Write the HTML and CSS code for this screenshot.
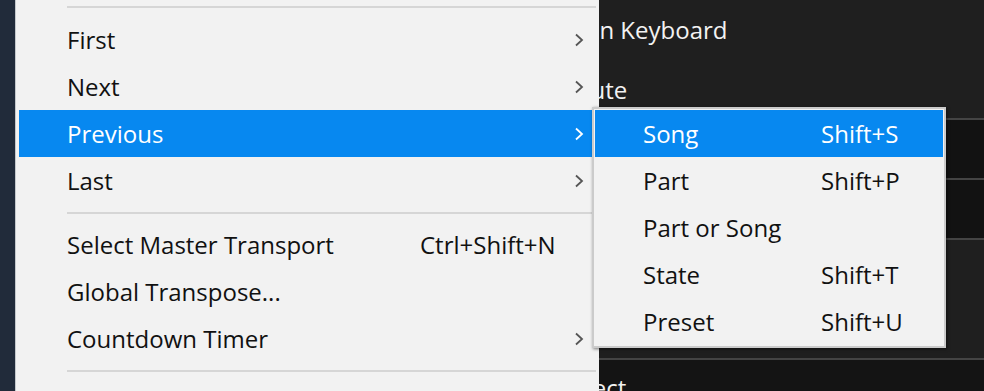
FILE: index.html
```html
<!DOCTYPE html>
<html lang="en">
<head>
  <meta charset="UTF-8" />
  <title>Transport menu</title>
  <link rel="stylesheet" href="styles.css">
</head>
<body>
  <div class="app">
    <div class="rail"></div>
    <div class="panel">
      <div class="band band-top">
        <div class="bg-item bg-keyboard">Screen Keyboard</div>
        <div class="bg-item bg-mute">Mute</div>
      </div>
      <div class="band band-dark"></div>
      <div class="band band-dark"></div>
      <div class="band band-mid"></div>
      <div class="band band-last">
        <div class="bg-item bg-select">Select</div>
      </div>
    </div>

    <div class="menu main-menu">
      <div class="sep sep-top"></div>
      <div class="item"><span class="label">First</span><span class="keys"></span><svg class="chev" viewBox="0 0 10 14"><polyline points="2,1.5 8,7 2,12.5"/></svg></div>
      <div class="item"><span class="label">Next</span><span class="keys"></span><svg class="chev" viewBox="0 0 10 14"><polyline points="2,1.5 8,7 2,12.5"/></svg></div>
      <div class="item active"><span class="label">Previous</span><span class="keys"></span><svg class="chev" viewBox="0 0 10 14"><polyline points="2,1.5 8,7 2,12.5"/></svg></div>
      <div class="item"><span class="label">Last</span><span class="keys"></span><svg class="chev" viewBox="0 0 10 14"><polyline points="2,1.5 8,7 2,12.5"/></svg></div>
      <div class="sep"></div>
      <div class="item"><span class="label">Select Master Transport</span><span class="keys">Ctrl+Shift+N</span></div>
      <div class="item"><span class="label">Global Transpose...</span><span class="keys"></span></div>
      <div class="item"><span class="label">Countdown Timer</span><span class="keys"></span><svg class="chev" viewBox="0 0 10 14"><polyline points="2,1.5 8,7 2,12.5"/></svg></div>
      <div class="sep"></div>
    </div>

    <div class="menu sub-menu">
      <div class="item active"><span class="label">Song</span><span class="keys">Shift+S</span></div>
      <div class="item"><span class="label">Part</span><span class="keys">Shift+P</span></div>
      <div class="item"><span class="label">Part or Song</span><span class="keys"></span></div>
      <div class="item"><span class="label">State</span><span class="keys">Shift+T</span></div>
      <div class="item"><span class="label">Preset</span><span class="keys">Shift+U</span></div>
    </div>
  </div>
</body>
</html>
```

FILE: styles.css
```css
body { margin: 0; background: #1f1f1f; font-family: 'Open Sans', 'Noto Sans', sans-serif; font-size: 24px; overflow: hidden; }
.app { position: relative; display: flex; width: 984px; height: 391px; overflow: hidden; }
.rail { width: 15px; flex-shrink: 0; background: #212b3a; }
.panel { flex: 1; display: flex; flex-direction: column; }
.band { flex-shrink: 0; border-bottom: 2px solid #444; }
.band-top { height: 118px; background: #1f1f1f; }
.band-dark { height: 58px; background: #121212; }
.band-mid { height: 118px; background: #1f1f1f; }
.band-last { flex: 1; border-bottom: none; background: #141414; }
.bg-item { height: 60px; line-height: 60px; color: #f2f2f2; white-space: nowrap; }
.bg-keyboard { padding-left: 523px; }
.bg-mute { padding-left: 554px; }
.bg-select { padding-left: 545px; margin-top: -2px; }

.menu { position: absolute; background: #f2f2f2; color: #111; }
.main-menu {
  left: 15px; top: 0; width: 578px; padding: 0 2px 30px 3px;
  border-left: 1px solid #c4c8cc;
}
.sub-menu {
  left: 592px; top: 107px; width: 348px; padding: 1px;
  border: 2px solid #cbcbcb;
  box-shadow: 1px 1px 3px rgba(0,0,0,0.5);
}
.item { display: flex; align-items: center; height: 47px; padding-left: 48px; white-space: nowrap; }
.item.active { background: #0788f0; color: #fff; }
.main-menu .label { width: 353px; }
.sub-menu .label { width: 178px; }
.keys { flex: 1; }
.chev { width: 10px; height: 14px; margin-right: 13px; fill: none; stroke: #555; stroke-width: 1.8; }
.item.active .chev { stroke: #fff; }
.sep { height: 2px; background: #d6d6d6; margin: 8px 1px 7px 48px; }
.sep-top { margin: 6px 1px 8px 48px; }
```
